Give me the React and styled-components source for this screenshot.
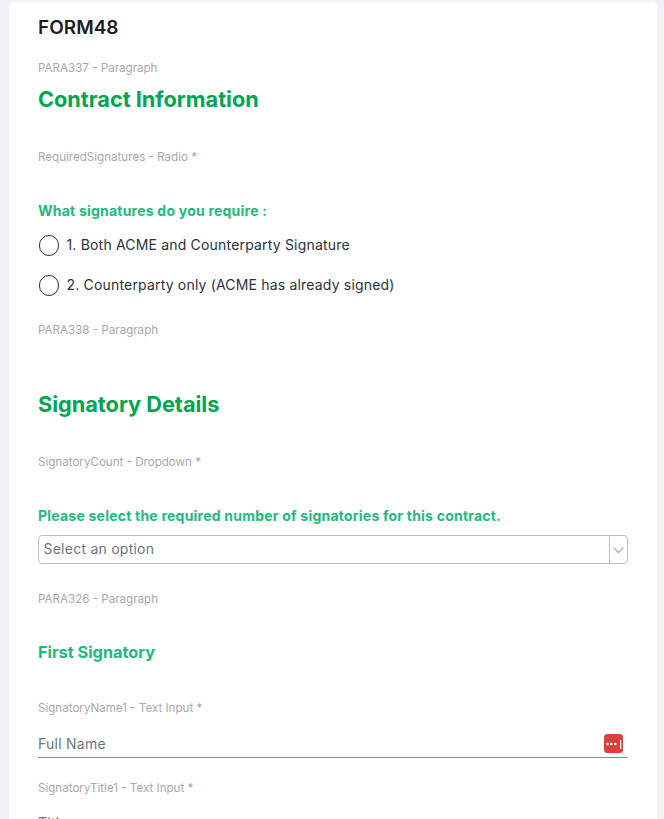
import React from 'react';
import styled, { createGlobalStyle } from 'styled-components';

const GlobalStyle = createGlobalStyle`
  html, body {
    margin: 0;
    height: 100%;
    overflow: hidden;
    background-color: #f1f1f8;
    font-family: Inter, "Liberation Sans", sans-serif;
  }
`;

const Card = styled.div`
  box-sizing: border-box;
  width: 648px;
  margin: 2px 0 0 9px;
  padding: 15px 29px 0;
  min-height: 900px;
  background-color: #ffffff;
  border-radius: 5px 5px 0 0;
`;

const FormTitle = styled.h1`
  margin: 0 0 21px;
  height: 22px;
  line-height: 22px;
  font-size: 19px;
  font-weight: 600;
  color: #1d1d22;
`;

// field label
const FieldTag = styled.div`
  height: 16px;
  line-height: 16px;
  font-size: 11.6px;
  color: #a8a8ae;
  margin-bottom: ${(props) => props.$gap || 0}px;
`;

// headings
const Heading = styled.h2`
  margin: 0 0 ${(props) => props.$gap}px;
  height: 28px;
  line-height: 28px;
  font-size: 21.7px;
  font-weight: 700;
  color: #00a651;
`;

const SubHeading = styled.h3`
  margin: 0 0 ${(props) => props.$gap}px;
  height: 20px;
  line-height: 20px;
  font-size: 16.3px;
  font-weight: 700;
  color: #1bbb80;
`;

const Question = styled.div`
  height: 18px;
  line-height: 18px;
  font-size: 14px;
  font-weight: 700;
  color: #1bbb80;
  letter-spacing: 0.22px;
  margin-bottom: ${(props) => props.$gap}px;
`;

// radio
const RadioRow = styled.label`
  display: flex;
  align-items: center;
  gap: 7.5px;
  height: 21px;
  margin-bottom: ${(props) => props.$gap}px;
  font-size: 14px;
  letter-spacing: 0.18px;
  color: #2b3040;
`;

const RadioCircle = styled.span`
  box-sizing: border-box;
  width: 20.5px;
  height: 20.5px;
  margin: 2px 0 0 0.5px;
  border: 1.5px solid #2c3142;
  border-radius: 50%;
  flex-shrink: 0;
`;

// dropdown
const Select = styled.div`
  box-sizing: border-box;
  display: flex;
  align-items: center;
  height: 29px;
  margin-bottom: 27px;
  border: 1px solid #bdbdbd;
  border-radius: 4px;
`;

const SelectText = styled.span`
  flex: 1;
  padding: 0 0 2px 4.5px;
  font-size: 14px;
  letter-spacing: 0.24px;
  color: #6f7480;
`;

const SelectArrow = styled.span`
  display: flex;
  align-items: center;
  justify-content: center;
  width: 17px;
  height: 100%;
  border-left: 1px solid #bdbdbd;
`;

// text input
const TextInput = styled.div`
  box-sizing: border-box;
  display: flex;
  align-items: center;
  justify-content: space-between;
  height: 26px;
  padding: 0 5px 2px 0;
  margin-bottom: 22px;
  border-bottom: 1px solid #8c8c8c;
  font-size: 14px;
  letter-spacing: 0.25px;
  color: #6f7480;
`;

const PasswordBadge = function() {
  return (
    <svg width="19" height="19" viewBox="0 0 19 19" aria-hidden="true">
      <rect width="19" height="19" rx="3.5" fill="#dc3f3d" />
      <circle cx="3.5" cy="10" r="1.3" fill="#fff" />
      <circle cx="7.3" cy="10" r="1.3" fill="#fff" />
      <circle cx="11.2" cy="10" r="1.3" fill="#fff" />
      <rect x="16" y="6" width="1.3" height="9" fill="#fff" />
    </svg>
  );
};

const Chevron = function() {
  return (
    <svg width="13" height="8" viewBox="0 0 13 8" fill="none" aria-hidden="true">
      <path d="M1.5 1.5 L6.5 6.5 L11.5 1.5" stroke="#bdbdbd" strokeWidth="1.6" />
    </svg>
  );
};

export default function App() {
  return (
    <>
      <GlobalStyle />
      <Card>
        <FormTitle>FORM48</FormTitle>

        <FieldTag $gap={9}>PARA337 - Paragraph</FieldTag>
        <Heading $gap={36}>Contract Information</Heading>

        <FieldTag $gap={37}>RequiredSignatures - Radio *</FieldTag>
        <Question $gap={14}>What signatures do you require :</Question>
        <RadioRow $gap={19}>
          <RadioCircle />
          1. Both ACME and Counterparty Signature
        </RadioRow>
        <RadioRow $gap={27}>
          <RadioCircle />
          2. Counterparty only (ACME has already signed)
        </RadioRow>

        <FieldTag $gap={52}>PARA338 - Paragraph</FieldTag>
        <Heading $gap={36}>Signatory Details</Heading>

        <FieldTag $gap={37}>SignatoryCount - Dropdown *</FieldTag>
        <Question $gap={10}>Please select the required number of signatories for this contract.</Question>
        <Select>
          <SelectText>Select an option</SelectText>
          <SelectArrow>
            <Chevron />
          </SelectArrow>
        </Select>

        <FieldTag $gap={35}>PARA326 - Paragraph</FieldTag>
        <SubHeading $gap={38}>First Signatory</SubHeading>

        <FieldTag $gap={16}>SignatoryName1 - Text Input *</FieldTag>
        <TextInput>
          Full Name
          <PasswordBadge />
        </TextInput>

        <FieldTag $gap={15}>SignatoryTitle1 - Text Input *</FieldTag>
        <TextInput>Title</TextInput>
      </Card>
    </>
  );
}
